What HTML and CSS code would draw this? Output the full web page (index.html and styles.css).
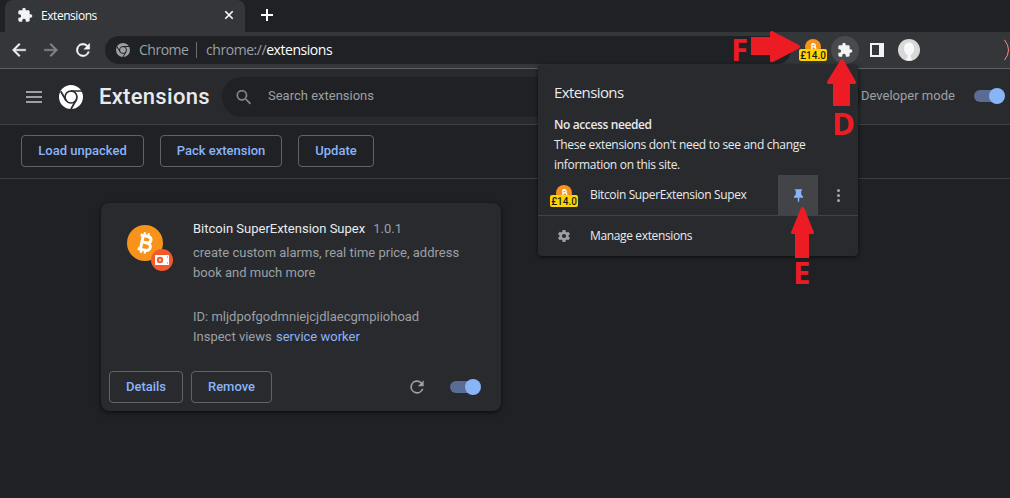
FILE: index.html
```html
<!DOCTYPE html>
<html lang="en">
<head>
<meta charset="utf-8">
<title>Extensions</title>
<link rel="stylesheet" href="styles.css">
</head>
<body>
<svg class="defs" width="0" height="0">
  <defs>
    <symbol id="puzzle" viewBox="0 0 24 24"><path d="M20.500 11H19V7c0-1.100-.9-2-2-2h-4V3.500a2.500 2.500 0 0 0-5 0V5H4c-1.100 0-2 .9-2 2v3.800h1.500a2.700 2.700 0 0 1 0 5.400H2V20c0 1.100.9 2 2 2h3.800v-1.500a2.700 2.700 0 0 1 5.400 0V22H17c1.100 0 2-.9 2-2v-4h1.500a2.500 2.500 0 0 0 0-5z"/></symbol>
    <symbol id="reload" viewBox="0 0 24 24"><path d="M17.650 6.350A8 8 0 1 0 19.730 14h-2.080A6 6 0 1 1 12 6c1.660 0 3.140.69 4.220 1.780L13 11h7V4z"/></symbol>
    <symbol id="arrow" viewBox="0 0 24 24"><path d="M20 11H7.830l5.590-5.590L12 4l-8 8 8 8 1.410-1.410L7.830 13H20z"/></symbol>
    <symbol id="chrome" viewBox="0 0 24 24">
      <circle cx="12" cy="12" r="12"/>
      <g class="chrome-gap" fill="none" stroke-width="1.700"><circle cx="12" cy="12" r="6"/><path d="M12 6h11M6.800 15L1.700 6.200M17.200 15L12 24"/></g>
    </symbol>
    <symbol id="coin" viewBox="0 0 36 36">
      <circle cx="18" cy="18" r="18" fill="#f7931a"/>
      <g transform="rotate(12 18 18)" fill="none" stroke="#fff" stroke-width="3"><path d="M12 11h7.500c5 0 5 6.500 0 6.500h-4.500h5c5.500 0 5.500 7.500 0 7.500H12M14.800 11v14"/><path stroke-width="2.200" d="M15.800 7.500v4M19.800 7.500v4M15.800 24.500v4M19.800 24.500v4"/></g>
    </symbol>
    <symbol id="small-coin" viewBox="0 0 16 16">
      <circle cx="8" cy="8" r="8" fill="#f7931a"/>
      <path d="M6.200 5.300h2.600c2 0 2 2.600 0 2.600h-2h2.300c2.200 0 2.200 3 0 3H5.500M6.900 5.300v5.500M7.500 4v1.500M9 4v1.500" fill="none" stroke="#fff" stroke-width="1.300"/>
    </symbol>
  </defs>
</svg>

<div class="tab-strip">
  <div class="tab">
    <svg class="tab-icon"><use href="#puzzle"/></svg>
    <span class="tab-title">Extensions</span>
    <svg class="tab-close" viewBox="0 0 10 10"><path d="M1.300 1.300l7.400 7.400M8.700 1.300L1.300 8.700"/></svg>
  </div>
  <svg class="new-tab" viewBox="0 0 12 12"><path d="M6 0v12M0 6h12"/></svg>
</div>

<div class="toolbar">
  <svg class="nav-icon"><use href="#arrow"/></svg>
  <svg class="nav-icon forward"><use href="#arrow"/></svg>
  <svg class="nav-icon refresh"><use href="#reload"/></svg>
  <div class="omnibox">
    <svg class="site-icon"><use href="#chrome"/></svg>
    <span class="site-name">Chrome</span>
    <span class="divider"></span>
    <span class="url">chrome://<b>extensions</b></span>
  </div>
  <div class="ticker"><svg><use href="#small-coin"/></svg><span>£14.0</span></div>
  <div class="ext-button"><svg><use href="#puzzle"/></svg></div>
  <span class="side-panel"></span>
  <svg class="avatar" viewBox="0 0 22 22"><circle cx="11" cy="11" r="11" fill="#d8d8d8"/><path d="M11 3.500c-3.300 0-5 2.500-5 5.700 0 3.500 1.800 6.300 3.600 6.800v2.500L7.500 21a11 11 0 0 0 7 0L12.600 18.500V16c2-.8 3.500-3.500 3.500-6.800 0-3.200-1.800-5.700-5.100-5.700z" fill="#f8f8f8"/></svg>
  <svg class="update-edge" viewBox="0 0 6 22"><path d="M.5.8q8 10.200 0 20.400"/></svg>
</div>

<div class="page-header">
  <span class="menu"></span>
  <svg class="logo"><use href="#chrome"/></svg>
  <h1>Extensions</h1>
  <div class="search">
    <svg viewBox="0 0 24 24"><path d="M15.500 14h-.79l-.28-.27A6.500 6.500 0 1 0 13.730 14.430l.27.28v.79l5 4.990L20.490 19zM9.500 14a4.500 4.500 0 1 1 0-9 4.500 4.500 0 0 1 0 9z" transform="translate(0 .5)"/></svg>
    <span>Search extensions</span>
  </div>
  <span class="dev-label">Developer mode</span>
  <span class="toggle"></span>
</div>

<div class="actions">
  <button class="btn load">Load unpacked</button>
  <button class="btn pack">Pack extension</button>
  <button class="btn update">Update</button>
</div>

<main>
  <article class="card">
    <div class="card-body">
      <div class="card-icon">
        <svg class="coin"><use href="#coin"/></svg>
        <svg class="source" viewBox="0 0 22 22"><circle cx="11" cy="11" r="11" fill="#f4592b"/><rect x="4" y="6" width="14" height="10" rx=".5" fill="#fff"/><circle cx="9" cy="11" r="2.200" fill="#fff" stroke="#f4592b" stroke-width="2"/><circle cx="9" cy="11" r=".7" fill="#f4592b"/><path d="M16 7.500h1v1h-1zM16 13.500h1v1h-1z" fill="#f4592b"/></svg>
      </div>
      <div class="info">
        <div class="name">Bitcoin SuperExtension Supex<span>1.0.1</span></div>
        <p>create custom alarms, real time price, address<br>book and much more</p>
        <div class="meta">ID: mljdpofgodmniejcjdlaecgmpiiohoad<br>Inspect views <a>service worker</a></div>
      </div>
    </div>
    <div class="card-actions">
      <button class="btn details">Details</button>
      <button class="btn remove">Remove</button>
      <svg class="card-reload"><use href="#reload"/></svg>
      <span class="toggle"></span>
    </div>
  </article>
</main>

<section class="popup">
  <h2>Extensions</h2>
  <h3>No access needed</h3>
  <p>These extensions don't need to see and change<br>information on this site.</p>
  <div class="row ext-row">
    <div class="ticker"><svg><use href="#small-coin"/></svg><span>£14.0</span></div>
    <span class="label">Bitcoin SuperExtension Supex</span>
    <div class="pin"><svg viewBox="0 0 10 14"><path d="M1 0h8v1.500H8V6l2 2v1.500H5.800V14H4.200V9.500H0V8l2-2V1.500H1z"/></svg></div>
    <span class="dots"><i></i><i></i><i></i></span>
  </div>
  <div class="row manage">
    <svg class="gear" viewBox="2 2 20 20"><path d="M19.430 12.980c.04-.32.07-.64.07-.98s-.03-.66-.07-.98l2.110-1.650c.19-.15.24-.42.12-.64l-2-3.460c-.12-.22-.39-.3-.61-.22l-2.490 1c-.52-.4-1.080-.73-1.690-.98l-.38-2.650A.49.49 0 0 0 14 2h-4c-.25 0-.46.18-.49.42l-.38 2.650c-.61.25-1.170.59-1.690.98l-2.490-1c-.23-.09-.49 0-.61.22l-2 3.460c-.13.22-.07.49.12.64l2.110 1.650c-.04.32-.07.65-.07.98s.03.66.07.98l-2.110 1.650c-.19.15-.24.42-.12.64l2 3.460c.12.22.39.3.61.22l2.490-1c.52.4 1.080.73 1.690.98l.38 2.650c.03.24.24.42.49.42h4c.25 0 .46-.18.49-.42l.38-2.650c.61-.25 1.170-.59 1.690-.98l2.490 1c.23.09.49 0 .61-.22l2-3.460c.12-.22.07-.49-.12-.64zM12 15.500a3.500 3.500 0 1 1 0-7 3.500 3.500 0 0 1 0 7z"/></svg>
    <span class="label">Manage extensions</span>
  </div>
</section>

<svg class="pointers" viewBox="0 0 1010 498">
  <path d="M751 37h19v-5q2-2 4 0l24 12.500q4 2.200 0 4.500l-24 12.500q-4 2-4-1V55h-19z"/>
  <path d="M833 106V84h-5q-2-1 0-4l12.500-20q1.500-2 3 0L855 80q2 3 0 4h-5v22z"/>
  <path d="M795 258V234h-3q-2-1 0-4l9-22q1.500-2 3 0l9 22q2 3 0 4h-4v24z"/>
  <text x="731" y="61">F</text>
  <text x="832" y="135">D</text>
  <text x="793" y="284">E</text>
</svg>
</body>
</html>
```

FILE: styles.css
```css
* { box-sizing: border-box; }
body { margin: 0; width: 1010px; height: 498px; overflow: hidden; position: relative; background: #202124; color: #e8eaed; font-family: Roboto, sans-serif; font-size: 13px; }
svg { display: block; flex: none; }
span, button { flex: none; white-space: nowrap; }
.defs { position: absolute; }

.tab-strip { height: 32px; display: flex; align-items: center; padding-left: 5px; font-family: "Open Sans", sans-serif; }
.tab { width: 240px; height: 32px; display: flex; align-items: center; padding: 0 11px 2px 12px; background: #35363a; border-radius: 8px 8px 0 0; }
.tab-icon { width: 16px; height: 16px; fill: #f1f3f4; }
.tab-title { margin-left: 8px; font-size: 12px; letter-spacing: -.45px; color: #fff; }
.tab-close { width: 10px; height: 10px; margin-left: auto; stroke: #fff; stroke-width: 1.600; }
.new-tab { width: 12px; height: 12px; margin: 0 0 2px 16px; stroke: #fff; stroke-width: 2; }

.toolbar { height: 37px; display: flex; align-items: center; padding: 0 0 0 9px; background: #35363a; border-bottom: 1px solid #5f6062; font-family: "Open Sans", sans-serif; }
.nav-icon { width: 20px; height: 20px; fill: #f1f3f4; stroke: #f1f3f4; stroke-width: .5; margin-right: 12px; }
.forward { transform: scaleX(-1); fill: #85868a; stroke: #85868a; }
.omnibox { width: 686px; height: 28px; display: flex; align-items: center; padding: 0 0 1px 11px; border-radius: 14px; background: #202124; font-size: 14px; color: #9aa0a6; --gap: #202124; }
.site-icon { width: 14px; height: 14px; fill: #9aa0a6; }
.chrome-gap { stroke: var(--gap); }
.site-name { margin-left: 9px; width: 50px; letter-spacing: -.5px; }
.divider { width: 1px; height: 16px; margin: 0 9px 0 7px; background: #6a6c70; }
.url { letter-spacing: -.45px; }
.url b { font-weight: 400; color: #fff; }
.ticker { width: 28px; height: 22px; position: relative; display: flex; justify-content: center; margin-left: 8px; flex: none; }
.ticker svg { width: 16px; height: 16px; }
.ticker span { position: absolute; left: 0; bottom: 0; width: 28px; height: 12px; border-radius: 2px; background: #ffd600; color: #1b1b1b; font: 500 10px/13px Roboto, sans-serif; text-align: center; }
.ext-button { width: 28px; height: 28px; margin-left: 4px; display: grid; place-items: center; border-radius: 50%; background: #494a4e; }
.ext-button svg { width: 16px; height: 16px; fill: #f1f3f4; }
.side-panel { width: 14px; height: 14px; margin-left: 11px; border: 2px solid #f1f3f4; border-right-width: 5px; }
.avatar { width: 22px; height: 22px; margin-left: 14px; }
.update-edge { width: 6px; height: 22px; margin-left: auto; fill: none; stroke: #f28b82; }

.page-header { height: 56px; display: flex; align-items: center; padding: 0 4px 0 26px; background: #292a2d; border-bottom: 1px solid #3f4043; --gap: #292a2d; }
.menu { width: 16px; height: 12px; border: solid #9aa0a6; border-width: 2px 0; background: linear-gradient(#9aa0a6, #9aa0a6) 0 3px / 16px 2px no-repeat; }
.logo { width: 24px; height: 24px; margin-left: 17px; fill: #fff; }
h1 { width: 123px; margin: 0 0 0 16px; font-size: 22px; font-weight: 500; line-height: 28px; letter-spacing: .3px; }
.search { width: 639px; height: 40px; display: flex; align-items: center; padding-left: 12px; border-radius: 20px; background: #202124; color: #9aa0a6; }
.search svg { width: 20px; height: 20px; fill: #80868b; margin-right: 14px; }
.search span, .dev-label { padding-bottom: 2px; }
.dev-label { color: #9aa0a6; }
.toggle { width: 32px; height: 16px; flex: none; position: relative; margin-left: auto; }
.page-header .toggle { margin-bottom: 1px; }
.toggle::before { content: ""; display: block; width: 28px; height: 12px; margin-top: 2px; border-radius: 6px; background: #5b6c94; }
.toggle::after { content: ""; position: absolute; right: 1px; top: 0; width: 16px; height: 16px; border-radius: 50%; background: #8ab4f8; }

.actions { height: 54px; display: flex; gap: 16px; padding: 10px 21px; border-bottom: 1px solid #3c3d40; }
.btn { height: 32px; padding: 0 0 2px; border: 1px solid #5f6368; border-radius: 4px; background: none; color: #8ab4f8; font: 500 13px Roboto, sans-serif; }
.load { width: 123px; } .pack { width: 122px; } .update { width: 76px; }
.details { width: 74px; } .remove { width: 81px; }

main { padding: 24px 0 0 101px; }
.card { width: 400px; height: 208px; display: flex; flex-direction: column; justify-content: space-between; padding: 16px 8px 8px; border-radius: 8px; background: #292a2d; box-shadow: 0 1px 3px #0008, 0 2px 6px #0004; color: #9aa0a6; line-height: 20px; }
.card-body { display: flex; }
.card-icon { width: 46px; height: 46px; margin: 6px 20px 0 18px; position: relative; flex: none; }
.coin { width: 36px; height: 36px; }
.source { width: 22px; height: 22px; position: absolute; left: 24px; top: 24px; }
.info { flex: 1; }
.name { color: #e8eaed; margin-bottom: 4px; }
.name span { color: #9aa0a6; margin-left: 8px; }
.info p { margin: 0 0 24px; }
.info a { color: #8ab4f8; margin-left: 1px; }
.card-actions { height: 32px; display: flex; align-items: center; gap: 8px; }
.card-reload { width: 20px; height: 20px; margin-left: 127px; fill: #9aa0a6; }
.card-actions .toggle { margin-right: 11px; }

.popup { position: absolute; left: 538px; top: 65px; width: 320px; height: 191px; border-radius: 4px; background: #292a2d; box-shadow: 0 1px 4px #000a; font: 12px/20px "Open Sans", sans-serif; }
.popup h2 { margin: 17px 0 13px 16px; font-size: 15px; font-weight: 400; line-height: 20px; letter-spacing: -.6px; }
.popup h3 { margin: 0 0 0 16px; font-size: 12px; font-weight: 600; line-height: 20px; letter-spacing: -.38px; }
.popup p { margin: 0 0 0 16px; height: 40px; letter-spacing: -.3px; }
.row { height: 40px; display: flex; align-items: center; }
.row .ticker { margin: 2px 0 0 12px; }
.label { width: 188px; margin-left: 12px; letter-spacing: -.36px; }
.pin { width: 40px; height: 40px; display: grid; place-items: center; background: #434447; }
.pin svg { width: 9px; height: 13px; fill: #8ab4f8; }
.dots { width: 3px; margin-left: 19px; display: grid; gap: 2px; }
.dots i { width: 3px; height: 3px; border-radius: 50%; background: #a5a8ac; }
.manage { height: 41px; border-top: 1px solid #414245; }
.gear { width: 12px; height: 12px; margin: 0 8px 0 20px; fill: #9aa0a6; }

.pointers { position: absolute; inset: 0; width: 1010px; height: 498px; fill: #ed1c24; font: 700 31px "Open Sans", sans-serif; }
```
